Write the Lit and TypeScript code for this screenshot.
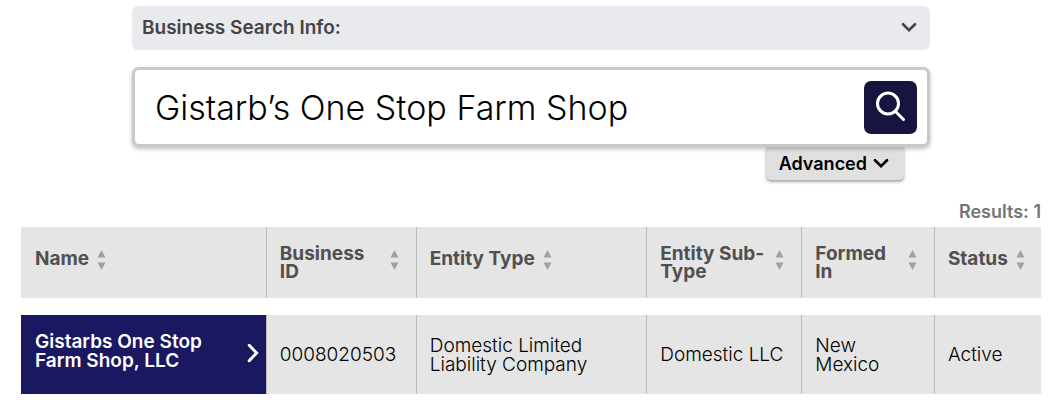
import { LitElement, html, css } from "lit";
import { customElement, property, state } from "lit/decorators.js";

interface Business {
  name: string;
  id: string;
  type: string;
  subType: string;
  formedIn: string;
  status: string;
}

const columns = ["Name", "Business ID", "Entity Type", "Entity Sub-Type", "Formed In", "Status"];

@customElement("chevron-icon")
class ChevronIcon extends LitElement {
  static styles = css`
    :host { display: inline-flex; flex: none; }
    svg { display: block; }
  `;
  @property() direction = "down";

  render() {
    return this.direction === "right"
      ? html`<svg width="12" height="20" viewBox="0 0 12 20" fill="none" stroke="currentColor" stroke-width="3" stroke-linecap="round" stroke-linejoin="miter" aria-hidden="true"><path d="M2.2 2.3 9.6 10 2.2 17.7" /></svg>`
      : html`<svg width="16" height="12" viewBox="0 0 16 12" fill="none" stroke="currentColor" stroke-width="2.7" stroke-linecap="round" stroke-linejoin="miter" aria-hidden="true"><path d="M2 2.2 8 8.2 14 2.2" /></svg>`;
  }
}

@customElement("app-root")
class AppRoot extends LitElement {
  static styles = css`
    :host {
      display: block;
      background: #fff;
      color: #000;
      font-family: Inter, sans-serif;
      font-size: 19px;
      line-height: 19px;
    }
    * { box-sizing: border-box; }
    button, input { font: inherit; color: inherit; margin: 0; }
    button { cursor: pointer; border: 0; }
    .page { padding: 6px 17px 18px 21px; }
    .search { max-width: 798px; margin: 0 auto; display: flex; flex-direction: column; }
    .info {
      display: flex;
      align-items: center;
      justify-content: space-between;
      padding: 12px 13px 13px 10px;
      border-radius: 6px;
      background: #e9eaee;
      color: #444;
      font-weight: 600;
      text-align: left;
    }
    .box {
      display: flex;
      align-items: center;
      margin-top: 17px;
      padding: 11px 10px 10px 20px;
      border: 3px solid #c9c9c9;
      border-radius: 7px;
      background: #fff;
      box-shadow: 0 2px 4px rgba(0, 0, 0, 0.25);
      position: relative;
      z-index: 1;
    }
    .query {
      flex: 1;
      min-width: 0;
      padding: 0;
      border: 0;
      outline: 0;
      background: transparent;
      font-size: 34px;
      line-height: 44px;
      font-weight: 300;
    }
    .go {
      flex: none;
      display: flex;
      padding: 9px 11px 12px;
      border-radius: 7px;
      background: #17143f;
      color: #fff;
    }
    .advanced {
      align-self: flex-end;
      display: flex;
      align-items: center;
      gap: 6px;
      margin-right: 26px;
      padding: 7px 15px 7px 13px;
      border-radius: 0 0 5px 5px;
      background: #e0e0e0;
      box-shadow: 0 2px 3px rgba(0, 0, 0, 0.35);
      font-size: 18px;
      font-weight: 600;
    }
    .count {
      margin: 22px 0 6px;
      color: #757575;
      font-size: 18px;
      font-weight: 600;
      text-align: right;
    }
    table { width: 100%; border-collapse: separate; border-spacing: 0; table-layout: fixed; }
    .c0 { width: 24%; }
    .c1 { width: 14.7%; }
    .c2 { width: 22.6%; }
    .c3 { width: 15.2%; }
    .c4 { width: 13%; }
    .c5 { width: 10.5%; }
    th, td { text-align: left; background: #e5e5e5; background-clip: padding-box; }
    th + th, td + td { box-shadow: inset 1px 0 #bcbcbc; }
    th { height: 71px; padding: 0 0 6px; color: #505050; }
    td { height: 96px; padding: 0 14px; border-top: 17px solid transparent; font-weight: 300; }
    td:last-child { padding-right: 8px; }
    .sort {
      display: flex;
      align-items: center;
      gap: 8px;
      width: 100%;
      padding: 0 17px 0 14px;
      background: transparent;
      font-weight: 700;
      line-height: 18px;
      text-align: left;
    }
    .c5 .sort { padding-right: 8px; }
    .label { min-height: 32px; padding-top: 6px; }
    .arrows { flex: none; }
    td.name { padding: 0 7px 8px 14px; background-color: #1a1860; color: #fff; }
    .link {
      display: flex;
      align-items: center;
      justify-content: space-between;
      gap: 20px;
      color: inherit;
      font-weight: 600;
      text-decoration: none;
    }
    .link chevron-icon { margin-top: 5px; }
  `;

  @state() private query = "Gistarb’s One Stop Farm Shop";
  @state() private results: Business[] = [
    {
      name: "Gistarbs One Stop Farm Shop, LLC",
      id: "0008020503",
      type: "Domestic Limited Liability Company",
      subType: "Domestic LLC",
      formedIn: "New Mexico",
      status: "Active",
    },
  ];

  private onInput(e: Event) {
    this.query = (e.target as HTMLInputElement).value;
  }

  render() {
    return html`
      <main class="page">
        <form class="search" role="search" @submit=${(e: Event) => e.preventDefault()}>
          <button class="info" type="button" aria-expanded="false">
            Business Search Info:<chevron-icon></chevron-icon>
          </button>
          <div class="box">
            <input class="query" type="text" aria-label="Business name" .value=${this.query} @input=${this.onInput} />
            <button class="go" type="submit" aria-label="Search">
              <svg width="31" height="32" viewBox="0 0 31 32" fill="none" stroke="currentColor" stroke-width="3" stroke-linecap="round" aria-hidden="true">
                <circle cx="13" cy="13.5" r="10.5" />
                <path d="M20.5 21.5 28.5 29.5" />
              </svg>
            </button>
          </div>
          <button class="advanced" type="button" aria-expanded="false">
            Advanced<chevron-icon></chevron-icon>
          </button>
        </form>
        <p class="count">Results: ${this.results.length}</p>
        <table>
          <thead>
            <tr>
              ${columns.map(
                (label, i) => html`<th class="c${i}" scope="col">
                  <button class="sort" type="button">
                    <span class="label">${label}</span>
                    <svg class="arrows" width="9" height="20" viewBox="0 0 9 20" fill="#a0a0a0" aria-hidden="true">
                      <path d="M4.5 0 8.5 7.5H.5ZM.5 12.5H8.5L4.5 20Z" />
                    </svg>
                  </button>
                </th>`
              )}
            </tr>
          </thead>
          <tbody>
            ${this.results.map(
              (r) => html`<tr>
                <td class="name"><a class="link" href="#${r.id}"><span>${r.name}</span><chevron-icon direction="right"></chevron-icon></a></td>
                <td>${r.id}</td>
                <td>${r.type}</td>
                <td>${r.subType}</td>
                <td>${r.formedIn}</td>
                <td>${r.status}</td>
              </tr>`
            )}
          </tbody>
        </table>
      </main>
    `;
  }
}
